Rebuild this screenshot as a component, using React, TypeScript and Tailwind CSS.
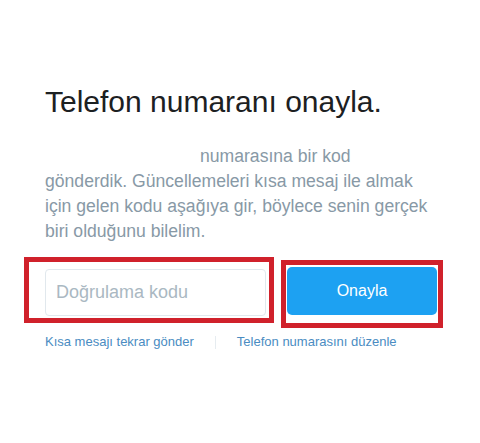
import React from "react";

export default function App() {
  return (
    <div className="w-[480px] h-[443px] bg-white overflow-hidden font-['Liberation_Sans',Arial,sans-serif]">
      <div className="pl-[45px] pt-[84px]">
        <h1 className="text-[30px] leading-[36px] text-[#1c2022] font-normal">
          Telefon numaranı onayla.
        </h1>
        <p className="mt-[24px] text-[17.6px] leading-[25px] text-[#8899a6] whitespace-nowrap">
          <span className="inline-block w-[155px]" />numarasına bir kod
          <br />
          gönderdik. Güncellemeleri kısa mesaj ile almak
          <br />
          için gelen kodu aşağıya gir, böylece senin gerçek
          <br />
          biri olduğunu bilelim.
        </p>
        <div className="-ml-[21px] mt-[13px] flex items-start gap-[7px]">
          <div className="border-[5px] border-[#d0212b] pl-[16px] pt-[7px] pr-[3px] pb-[2px]">
            <input
              type="text"
              placeholder="Doğrulama kodu"
              className="block w-[221px] h-[47px] border border-[#e1e8ed] rounded-[4px] px-[10px] text-[18px] text-[#14171a] placeholder:text-[#aab8c2] outline-none bg-white"
            />
          </div>
          <div className="mt-[3px] border-[5px] border-[#d0212b] px-[1px] pt-[2px] pb-[8px]">
            <button className="block w-[150px] h-[48px] rounded-[5px] bg-[#1da1f2] text-white text-[16px]">
              Onayla
            </button>
          </div>
        </div>
        <div className="mt-[5px] flex items-center gap-[21px] text-[13px] leading-[18px] text-[#4a8cc2]">
          <span>Kısa mesajı tekrar gönder</span>
          <span className="block w-px h-[13px] bg-[#e6ecf0]" />
          <span>Telefon numarasını düzenle</span>
        </div>
      </div>
    </div>
  );
}
